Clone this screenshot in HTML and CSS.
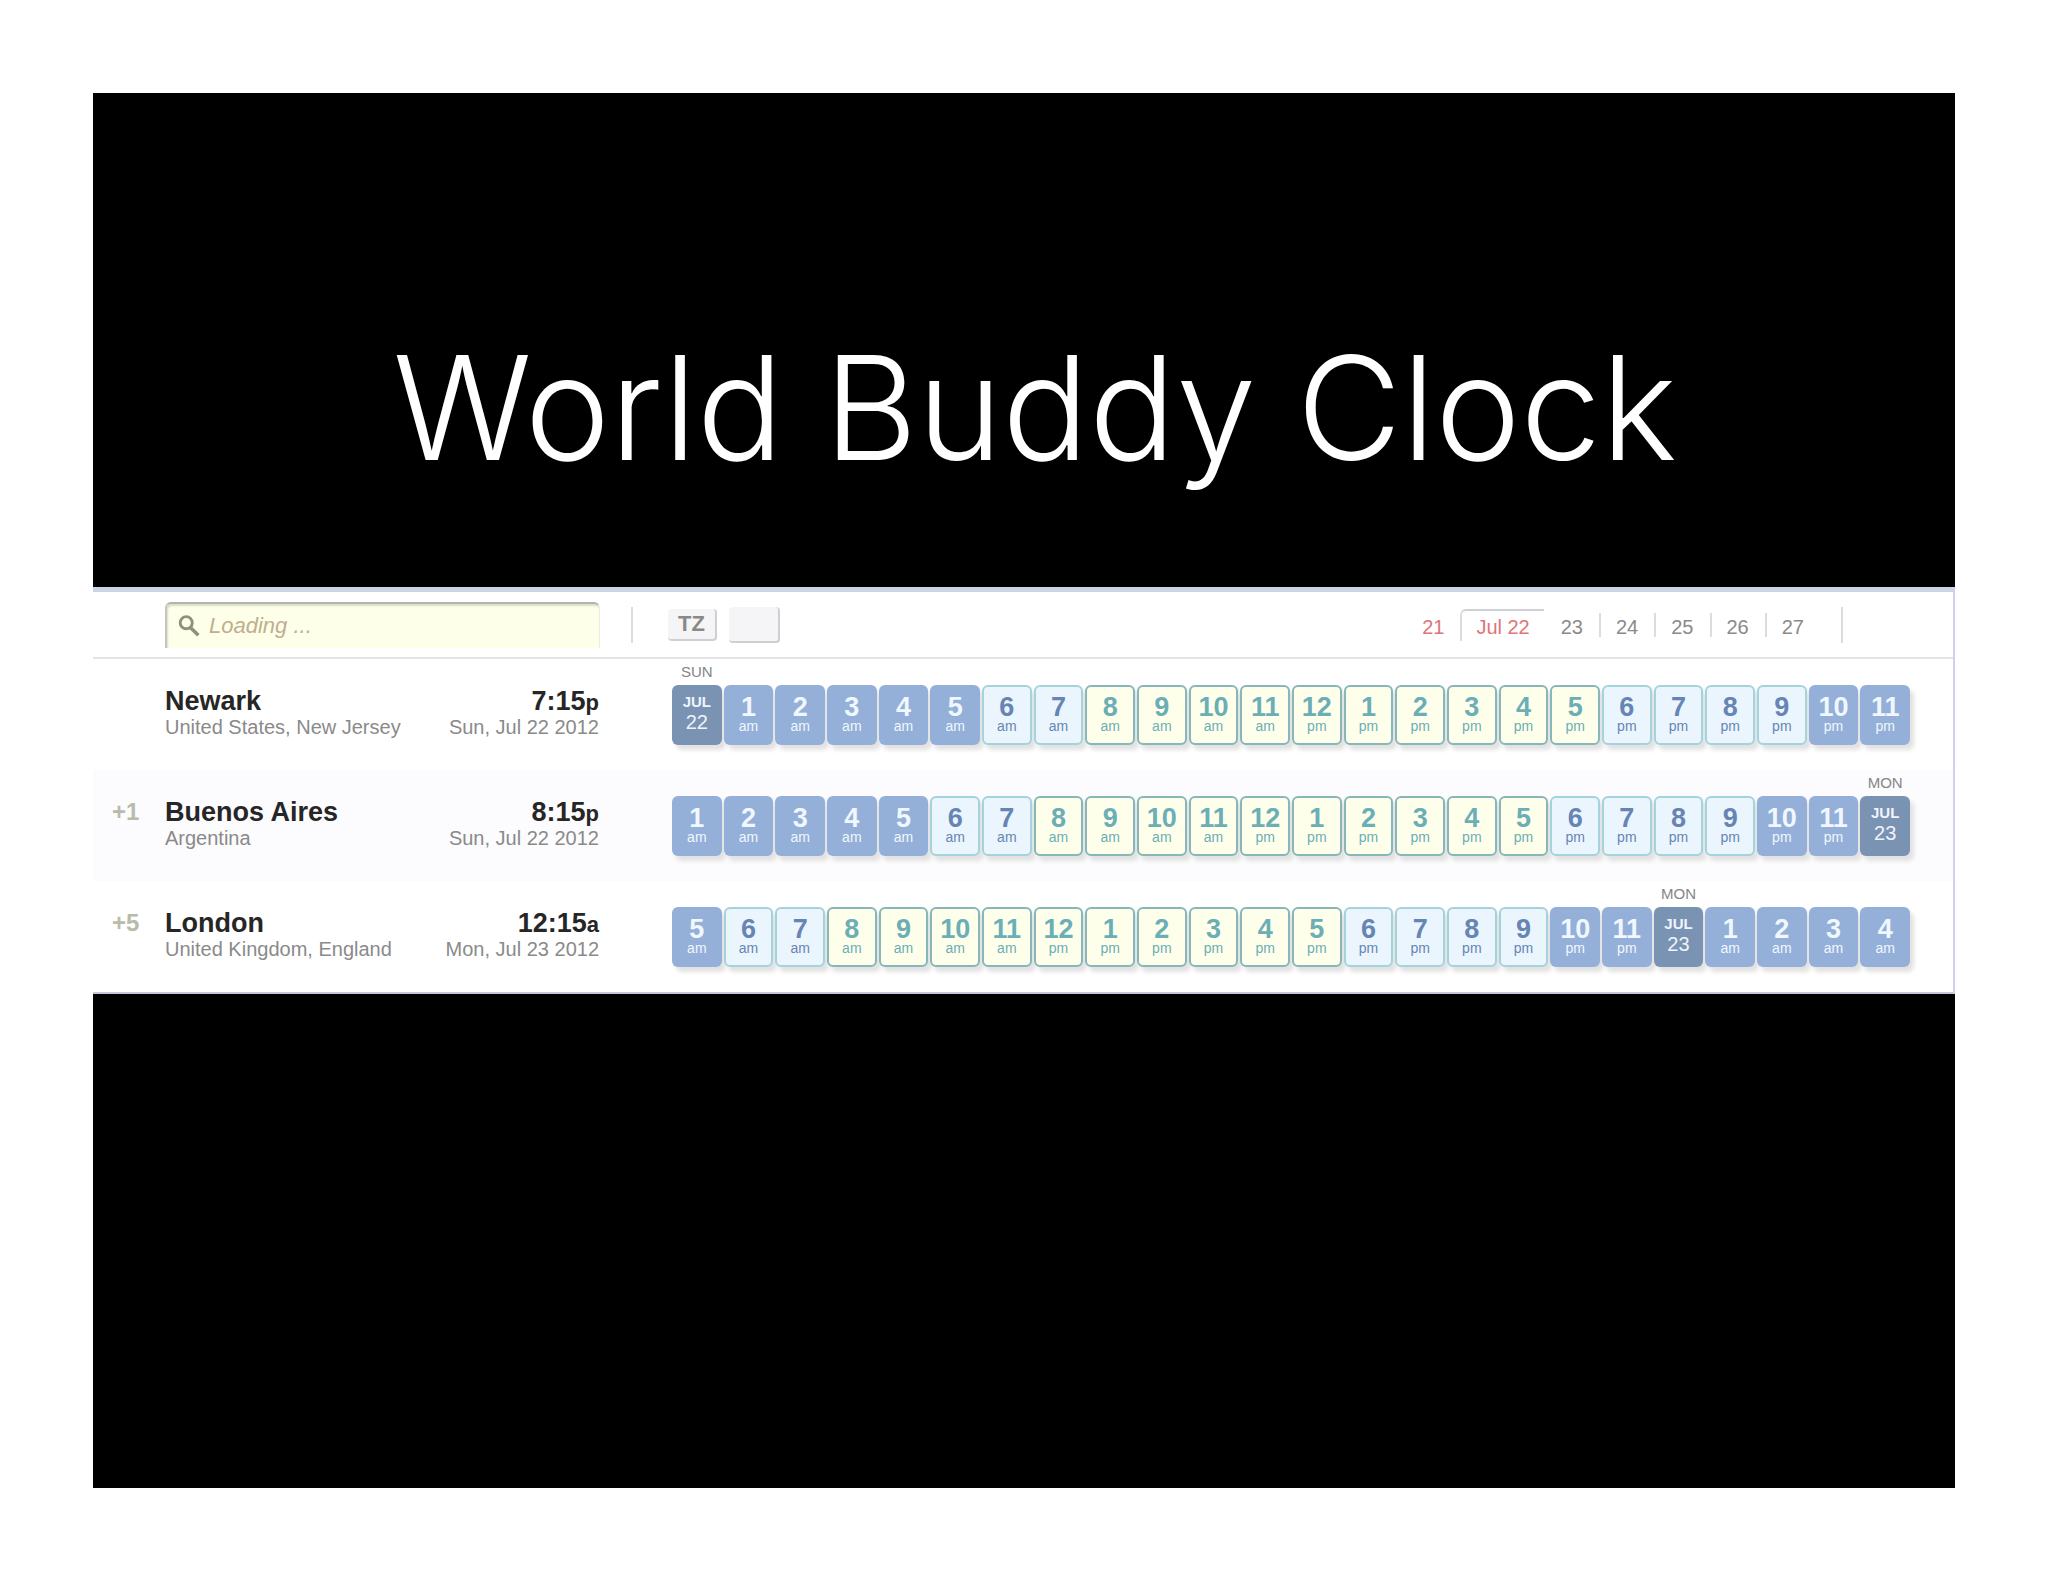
FILE: index.html
```html
<!DOCTYPE html>
<html lang="en">
<head>
    <meta charset="UTF-8">
    <meta name="viewport" content="width=device-width, initial-scale=1.0">
    <title>World Buddy Clock</title>
    <link rel="stylesheet" href="styles.css">
</head>
<body>
    <main class="slide">
        <h1>World Buddy Clock</h1>

        <section class="panel">
            <header class="toolbar">
                <label class="search">
                    <svg viewBox="0 0 20 20" width="22" height="22" aria-hidden="true">
                        <circle cx="7.5" cy="7" r="5.5" fill="none" stroke="#8f907c" stroke-width="2.6"/>
                        <path d="M11.5 11.5 L18.5 18.5" stroke="#8f907c" stroke-width="3.2"/>
                    </svg>
                    <input type="text" placeholder="Loading ..." aria-label="Search for a place">
                </label>
                <div class="tools">
                    <button class="tool">TZ</button>
                    <button class="tool blank" aria-label="Options"></button>
                </div>
                <nav class="days">
                    <a href="#" class="weekend">21</a>
                    <a href="#" class="weekend current">Jul 22</a>
                    <a href="#">23</a>
                    <a href="#">24</a>
                    <a href="#">25</a>
                    <a href="#">26</a>
                    <a href="#">27</a>
                </nav>
            </header>

            <div class="row">
                <div class="offset"></div>
                <div class="place">
                    <h2>Newark</h2>
                    <p>United States, New Jersey</p>
                </div>
                <div class="time">
                    <b>7:15<small>p</small></b>
                    <p>Sun, Jul 22 2012</p>
                </div>
                <div class="hours" data-start="0" data-weekday="SUN" data-day="22"></div>
            </div>
            <div class="row shaded">
                <div class="offset">+1</div>
                <div class="place">
                    <h2>Buenos Aires</h2>
                    <p>Argentina</p>
                </div>
                <div class="time">
                    <b>8:15<small>p</small></b>
                    <p>Sun, Jul 22 2012</p>
                </div>
                <div class="hours" data-start="1" data-weekday="MON" data-day="23"></div>
            </div>
            <div class="row">
                <div class="offset">+5</div>
                <div class="place">
                    <h2>London</h2>
                    <p>United Kingdom, England</p>
                </div>
                <div class="time">
                    <b>12:15<small>a</small></b>
                    <p>Mon, Jul 23 2012</p>
                </div>
                <div class="hours" data-start="5" data-weekday="MON" data-day="23"></div>
            </div>
        </section>
    </main>

    <script src="script.js"></script>
</body>
</html>
```
FILE: styles.css
```css
* {
    box-sizing: border-box;
}
body {
    margin: 0;
    padding: 93px;
    background-color: #fff;
    color: #8a8a8a;
    font-family: "Liberation Sans", Arial, sans-serif;
    font-size: 20px;
    line-height: 24px;
}
h1, h2, p {
    margin: 0;
}
.slide {
    background-color: #000;
    padding: 225px 0 494px;
}
h1 {
    color: #fff;
    font-family: Inter, sans-serif;
    font-size: 144px;
    font-weight: 300;
    line-height: 180px;
    text-align: center;
    padding-left: 22px;
    margin-bottom: 89px;
}
.panel {
    background-color: #fff;
    border-top: 5px solid #c9d5e4;
    border-right: 2px solid #cfd1e8;
    border-bottom: 2px solid #c6c9dc;
}
.toolbar {
    display: flex;
    align-items: center;
    height: 67px;
    padding-left: 72px;
    border-bottom: 2px solid #e4e4e8;
}
.search {
    display: flex;
    align-items: center;
    gap: 9px;
    width: 435px;
    height: 46px;
    padding: 0 11px;
    background-color: #feffe8;
    border-top: 2px solid #b3b3b0;
    border-left: 2px solid #c4c4c0;
    border-right: 1px solid #ecedda;
    border-radius: 6px 6px 0 0;
    box-shadow: inset 1px 2px 2px #dcdccb;
}
.search input {
    flex: 1;
    min-width: 0;
    padding: 0;
    border: none;
    outline: none;
    background: none;
    font: italic 22px "Liberation Sans", Arial, sans-serif;
}
.search input::placeholder {
    color: #bfae90;
    opacity: 1;
}
.tools {
    display: flex;
    align-items: center;
    gap: 12px;
    height: 36px;
    margin-left: 31px;
    padding-left: 35px;
    border-left: 2px solid #dcdce0;
}
.tool {
    width: 49px;
    height: 32px;
    padding: 0;
    background-color: #f5f5f7;
    border: none;
    border-right: 2px solid #cfcfd3;
    border-bottom: 2px solid #cfcfd3;
    border-radius: 4px;
    color: #8b8986;
    font: bold 22px "Liberation Sans", Arial, sans-serif;
}
.blank {
    width: 51px;
    height: 36px;
}
.days {
    display: flex;
    align-items: center;
    height: 36px;
    margin-left: auto;
    margin-right: 110px;
    padding-right: 21px;
    border-right: 2px solid #dcdce0;
}
.days a {
    height: 24px;
    padding: 2px 16px 0 15px;
    border-left: 2px solid #dcdce0;
    color: #8a8a8a;
    text-decoration: none;
}
.days a:first-child,
.days .current + a {
    border-left-color: transparent;
}
.days .weekend {
    color: #e07478;
}
.days .current {
    height: 32px;
    padding: 4px 14px 0;
    border-top: 2px solid #cfcfd6;
    border-radius: 6px 0 0 0;
}
.row {
    display: flex;
    height: 111px;
    padding: 26px 43px 0 0;
}
.shaded {
    background-color: #fcfbfd;
}
.offset {
    width: 72px;
    padding-left: 19px;
    color: #b9bbaa;
    font-size: 24px;
    font-weight: bold;
    line-height: 32px;
}
.place {
    width: 255px;
}
h2, .time b {
    display: block;
    color: #262626;
    font-size: 27px;
    font-weight: bold;
    line-height: 32px;
}
.place p, .time p {
    line-height: 20px;
    white-space: nowrap;
}
.time {
    width: 179px;
    text-align: right;
}
.time small {
    font-size: 22px;
    line-height: 20px;
}
.hours {
    flex: 1;
    display: grid;
    grid-template-columns: repeat(24, 1fr);
    gap: 2px;
    margin-left: 73px;
}
.hour {
    position: relative;
    height: 60px;
    padding-top: 7px;
    border: 2px solid transparent;
    border-radius: 6px;
    box-shadow: 4px 5px 4px #e2e2e2;
    text-align: center;
}
.hour b, .hour span {
    display: block;
}
.hour b {
    font-size: 27px;
    line-height: 26px;
}
.hour span {
    font-size: 14px;
    line-height: 12px;
}
.night {
    background-color: #94b0d8;
    color: #f0f7ff;
}
.edge {
    background-color: #ebf5fd;
    border-color: #a5d3dc;
    color: #6685b4;
}
.work {
    background-color: #feffeb;
    border-color: #87b7b8;
    color: #6caeb6;
}
.midnight {
    background-color: #7b93b3;
    color: #edf4fc;
}
.midnight b {
    font-size: 15px;
    line-height: 16px;
}
.midnight span {
    font-size: 20px;
    line-height: 24px;
}
/* weekday label above the first tile of a day */
.hour .weekday {
    position: absolute;
    top: -24px;
    left: 0;
    right: 0;
    color: #858585;
    font-size: 15px;
    line-height: 18px;
}
```
FILE: script.js
```js
function hourClass(h) {
    if (h === 0) return 'midnight';
    if (h < 6 || h > 21) return 'night';
    if (h < 8 || h > 17) return 'edge';
    return 'work';
}

document.querySelectorAll('.hours').forEach(function(strip) {
    const start = Number(strip.dataset.start);
    for (let i = 0; i < 24; i++) {
        const h = (start + i) % 24;
        const tile = document.createElement('div');
        tile.className = 'hour ' + hourClass(h);
        if (h === 0) {
            tile.innerHTML = `<span class="weekday">${strip.dataset.weekday}</span><b>JUL</b><span>${strip.dataset.day}</span>`;
        } else {
            tile.innerHTML = `<b>${h % 12 || 12}</b><span>${h < 12 ? 'am' : 'pm'}</span>`;
        }
        strip.appendChild(tile);
    }
});
```
